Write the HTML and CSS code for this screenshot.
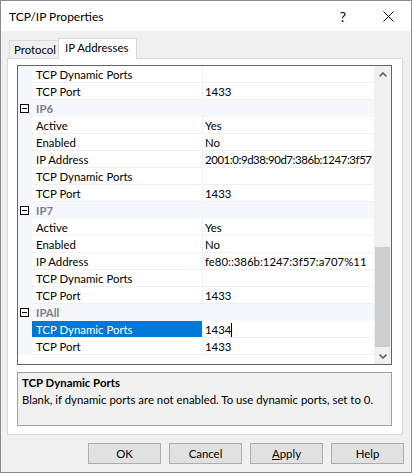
FILE: index.html
```html
<!DOCTYPE html>
<html>
<head>
<meta charset="utf-8">
<title>TCP/IP Properties</title>
<link rel="stylesheet" href="styles.css">
</head>
<body>
<div class="window">
  <div class="titlebar">
    <span class="title">TCP/IP Properties</span>
    <span class="help">?</span>
    <svg class="close" width="11" height="11" viewBox="0 0 11 11"><path d="M0.5 0.5 L10.5 10.5 M10.5 0.5 L0.5 10.5" stroke="#000" stroke-width="1" fill="none"/></svg>
  </div>
  <div class="content">
    <div class="tabs">
      <div class="tab first">Protocol</div>
      <div class="tab active">IP Addresses</div>
    </div>
    <div class="panel">
      <div class="grid">
        <div class="rows">
          <div class="row"><div class="gut"></div><div class="name">TCP Dynamic Ports</div><div class="val"></div></div>
          <div class="row"><div class="gut"></div><div class="name">TCP Port</div><div class="val">1433</div></div>
          <div class="row cat"><div class="gut"><span class="minus"></span></div><div class="cat-label">IP6</div></div>
          <div class="row"><div class="gut"></div><div class="name">Active</div><div class="val">Yes</div></div>
          <div class="row"><div class="gut"></div><div class="name">Enabled</div><div class="val">No</div></div>
          <div class="row"><div class="gut"></div><div class="name">IP Address</div><div class="val tight">2001:0:9d38:90d7:386b:1247:3f57</div></div>
          <div class="row"><div class="gut"></div><div class="name">TCP Dynamic Ports</div><div class="val"></div></div>
          <div class="row"><div class="gut"></div><div class="name">TCP Port</div><div class="val">1433</div></div>
          <div class="row cat"><div class="gut"><span class="minus"></span></div><div class="cat-label">IP7</div></div>
          <div class="row"><div class="gut"></div><div class="name">Active</div><div class="val">Yes</div></div>
          <div class="row"><div class="gut"></div><div class="name">Enabled</div><div class="val">No</div></div>
          <div class="row"><div class="gut"></div><div class="name">IP Address</div><div class="val">fe80::386b:1247:3f57:a707%11</div></div>
          <div class="row"><div class="gut"></div><div class="name">TCP Dynamic Ports</div><div class="val"></div></div>
          <div class="row"><div class="gut"></div><div class="name">TCP Port</div><div class="val">1433</div></div>
          <div class="row cat"><div class="gut"><span class="minus"></span></div><div class="cat-label">IPAll</div></div>
          <div class="row sel"><div class="gut"></div><div class="name">TCP Dynamic Ports</div><div class="val">1434<span class="caret"></span></div></div>
          <div class="row"><div class="gut"></div><div class="name">TCP Port</div><div class="val">1433</div></div>
        </div>
        <div class="scrollbar">
          <div class="sb-btn"><svg width="8" height="5" viewBox="0 0 8 5"><path d="M0.6 4.4 L4 1 L7.4 4.4" stroke="#606060" stroke-width="1.6" fill="none"/></svg></div>
          <div class="sb-track"><div class="sb-thumb"></div></div>
          <div class="sb-btn"><svg width="8" height="5" viewBox="0 0 8 5"><path d="M0.6 0.6 L4 4 L7.4 0.6" stroke="#606060" stroke-width="1.6" fill="none"/></svg></div>
        </div>
      </div>
      <div class="desc">
        <div class="desc-title">TCP Dynamic Ports</div>
        <div class="desc-text">Blank, if dynamic ports are not enabled. To use dynamic ports, set to 0.</div>
      </div>
    </div>
    <div class="buttons">
      <div class="btn">OK</div>
      <div class="btn">Cancel</div>
      <div class="btn"><u>A</u>pply</div>
      <div class="btn">Help</div>
    </div>
  </div>
</div>
</body>
</html>
```

FILE: styles.css
```css
* { box-sizing: border-box; }
html, body { margin: 0; padding: 0; }
body {
  font-family: Lato, "Liberation Sans", sans-serif;
  font-size: 11.4px;
  color: #000;
  width: 412px;
  height: 473px;
  overflow: hidden;
  background: #fff;
}
.window {
  width: 412px;
  height: 473px;
  border: 1px solid #8a8a8a;
  background: #f0f0f0;
  display: flex;
  flex-direction: column;
}
.titlebar {
  height: 30px;
  flex: none;
  background: #fff;
  display: flex;
  align-items: center;
  padding-left: 8px;
  font-size: 12px;
}
.title { flex: 1; }
.help { font-size: 14px; margin-right: 37px; }
.close { margin-right: 17px; }
.content {
  flex: 1;
  display: flex;
  flex-direction: column;
  padding: 7px 8px 8px 6px;
}
.tabs {
  display: flex;
  align-items: flex-end;
  margin-left: 2px;
  height: 20px;
  flex: none;
}
.tab {
  height: 18px;
  border: 1px solid #d9d9d9;
  border-bottom: none;
  background: #f0f0f0;
  padding-left: 4px;
  line-height: 17px;
  white-space: nowrap;
}
.tab.first { width: 49px; border-right: none; }
.tab.active {
  width: 79px;
  height: 21px;
  margin-bottom: -1px;
  background: #fff;
  padding-left: 6px;
  line-height: 18px;
  position: relative;
  z-index: 1;
}
.panel {
  height: 377px;
  flex: none;
  border: 1px solid #d9d9d9;
  background: #fff;
  padding: 6px 10px 8px 9px;
  display: flex;
  flex-direction: column;
}
.grid {
  height: 300px;
  flex: none;
  border: 1px solid #646464;
  display: flex;
  background: #fff;
}
.rows { width: 356px; display: flex; flex-direction: column; }
.row { height: 17px; display: flex; flex: none; }
.gut { width: 14px; background: #f4f7fc; flex: none; display: flex; align-items: center; }
.name {
  width: 171px;
  flex: none;
  border-right: 1px solid #f0f0f0;
  border-bottom: 1px solid #f0f0f0;
  padding-left: 4px;
  padding-top: 1px;
  line-height: 15px;
  white-space: nowrap;
  overflow: hidden;
}
.val {
  flex: 1;
  border-bottom: 1px solid #f0f0f0;
  padding-left: 2px;
  padding-top: 1px;
  line-height: 15px;
  white-space: nowrap;
  overflow: hidden;
}
.val.tight { letter-spacing: -0.4px; }
.row.cat { background: #f4f7fc; }
.cat-label {
  flex: 1;
  padding-left: 4px;
  padding-top: 1px;
  line-height: 16px;
  font-weight: bold;
  color: #808080;
}
.minus {
  width: 9px;
  height: 9px;
  margin-left: 2px;
  border: 1px solid #000;
  background: #fff;
  display: flex;
  align-items: center;
  justify-content: center;
}
.minus::before {
  content: "";
  width: 5px;
  height: 1px;
  background: #000;
}
.row.sel .name { background: #0078d7; color: #fff; }
.caret {
  display: inline-block;
  width: 1px;
  height: 14px;
  background: #000;
  vertical-align: -3px;
}
.scrollbar {
  width: 17px;
  background: #f0f0f0;
  display: flex;
  flex-direction: column;
}
.sb-btn {
  height: 17px;
  flex: none;
  display: flex;
  align-items: center;
  justify-content: center;
}
.sb-track { flex: 1; padding: 164px 1px 1px 1px; }
.sb-thumb { height: 100px; background: #cdcdcd; }
.desc {
  margin-top: 7px;
  height: 54px;
  flex: none;
  border: 1px solid #a0a0a0;
  background: #f0f0f0;
  padding: 2px 4px 0 4px;
  line-height: 16px;
  white-space: nowrap;
}
.desc-title { font-weight: bold; }
.desc-text { margin-top: 1px; }
.buttons {
  display: flex;
  justify-content: flex-end;
  gap: 8px;
  margin-top: 8px;
  margin-right: -1px;
}
.btn {
  width: 73px;
  height: 21px;
  border: 1px solid #adadad;
  background: #e1e1e1;
  text-align: center;
  line-height: 19px;
}
.btn u { text-decoration: underline; }
```
